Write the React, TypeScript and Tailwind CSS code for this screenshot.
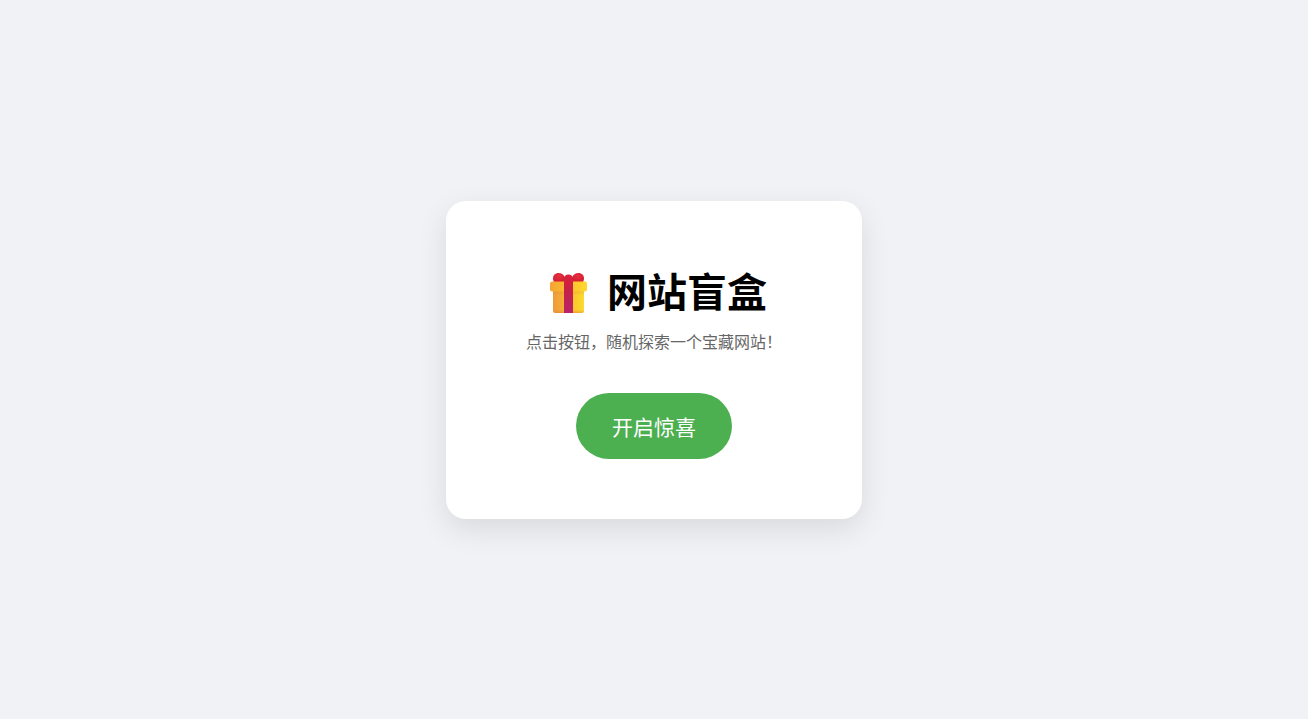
function GiftIcon() {
  return (
    <svg viewBox="0 0 54 54" className="size-[54px] shrink-0" aria-hidden="true">
      <defs>
        <linearGradient id="box" x1="0" x2="1" y1="0" y2="0">
          <stop offset="0" stopColor="#ec9a3c" />
          <stop offset="0.35" stopColor="#f8ae35" />
          <stop offset="0.65" stopColor="#fcc52c" />
          <stop offset="1" stopColor="#fbdc2f" />
        </linearGradient>
        <linearGradient id="lid" x1="0" x2="1" y1="0" y2="0">
          <stop offset="0" stopColor="#f2a436" />
          <stop offset="0.35" stopColor="#fcb52e" />
          <stop offset="1" stopColor="#ffd92e" />
        </linearGradient>
        <linearGradient id="shade" x1="0" x2="0" y1="0" y2="1">
          <stop offset="0.2" stopColor="#d9822c" stopOpacity="0.25" />
          <stop offset="0.35" stopColor="#d9822c" stopOpacity="0" />
          <stop offset="0.88" stopColor="#e07b3c" stopOpacity="0" />
          <stop offset="1" stopColor="#e07b3c" stopOpacity="0.5" />
        </linearGradient>
        <linearGradient id="ribbon" x1="0" x2="0" y1="0" y2="1">
          <stop offset="0" stopColor="#dc2138" />
          <stop offset="0.4" stopColor="#c62248" />
          <stop offset="1" stopColor="#b82368" />
        </linearGradient>
        <radialGradient id="bow" cx="0.5" cy="0.35" r="0.7">
          <stop offset="0" stopColor="#e8303f" />
          <stop offset="1" stopColor="#cf1b31" />
        </radialGradient>
      </defs>
      <rect x="12" y="23" width="31" height="27" rx="2.5" fill="url(#box)" />
      <rect x="12" y="23" width="31" height="27" rx="2.5" fill="url(#shade)" />
      <path d="M13 19c-.7-1-1-2.200-1-3.500C12 12.300 14.300 10 17.500 10c3 0 5.600 1.800 6.500 4.500V19z" fill="url(#bow)" />
      <path d="M42 19c.7-1 1-2.200 1-3.500 0-3.200-2.300-5.500-5.500-5.500-3 0-5.600 1.800-6.500 4.500V19z" fill="url(#bow)" />
      <rect x="9" y="18.500" width="37" height="10" rx="2" fill="url(#lid)" />
      <path d="M23 50V16c0-2.800 1.800-4.500 4.500-4.500s4.500 1.700 4.500 4.500v34z" fill="url(#ribbon)" />
    </svg>
  )
}

export default function App() {
  return (
    <main className="flex min-h-screen items-center justify-center bg-[#f0f2f5] font-['Noto_Sans_CJK_SC',sans-serif] text-black">
      <section className="rounded-[20px] bg-white px-20 py-15 text-center shadow-[0_10px_30px_rgba(0,0,0,0.1)]">
        <h1 className="mb-2.5 flex items-center justify-center gap-3 text-[40px] leading-[58px] font-bold">
          <GiftIcon />
          网站盲盒
        </h1>
        <p className="mb-10 text-base text-[#666]">点击按钮，随机探索一个宝藏网站！</p>
        <button
          type="button"
          className="cursor-pointer rounded-full bg-[#4caf50] px-9 py-[18px] text-[21px] leading-[30px] text-white"
        >
          开启惊喜
        </button>
      </section>
    </main>
  )
}
